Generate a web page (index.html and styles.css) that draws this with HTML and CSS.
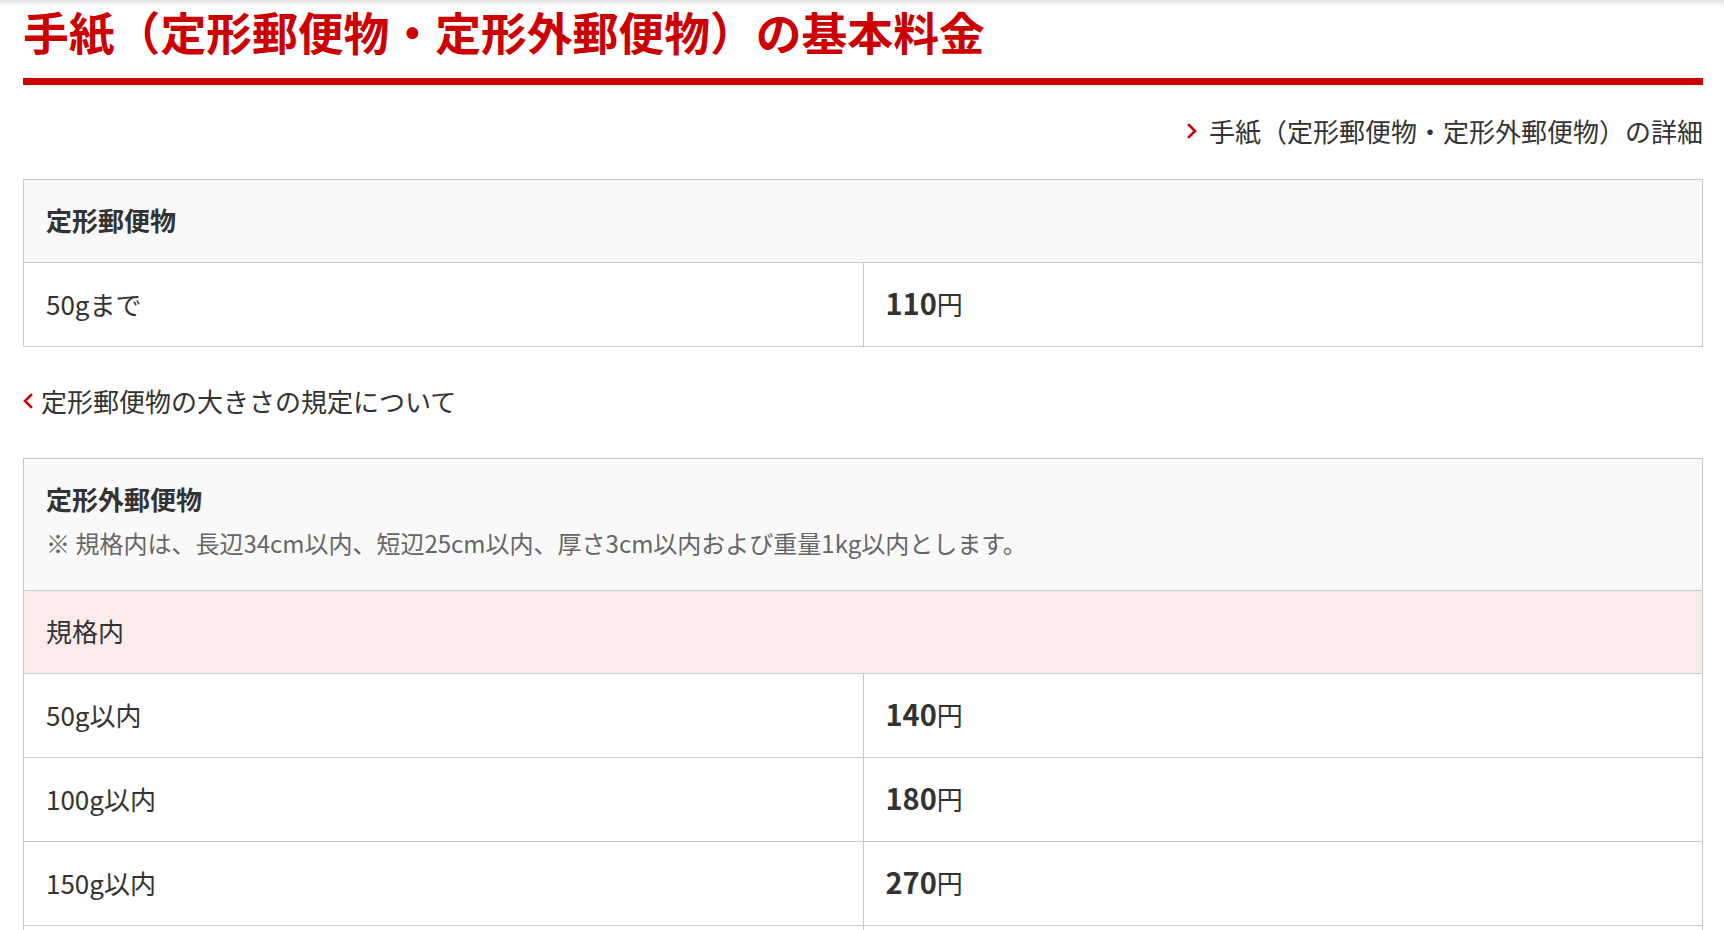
FILE: index.html
```html
<!DOCTYPE html>
<html lang="ja">
<head>
<meta charset="utf-8">
<title>手紙の基本料金</title>
<link rel="stylesheet" href="styles.css">
</head>
<body>
<div class="page">
  <h2 class="title">手紙（定形郵便物・定形外郵便物）の基本料金</h2>

  <div class="link-row link-row--right">
    <a class="link" href="#">
      <svg class="chev" width="10" height="16" viewBox="0 0 10 16"><polyline points="2,2 8,8 2,14"/></svg>
      <span>手紙（定形郵便物・定形外郵便物）の詳細</span>
    </a>
  </div>

  <table class="rate">
    <colgroup><col class="col-half"><col class="col-half"></colgroup>
    <tr><th colspan="2" class="head">定形郵便物</th></tr>
    <tr><td>50gまで</td><td class="price"><b>110</b>円</td></tr>
  </table>

  <div class="link-row link-row--mid">
    <a class="link" href="#">
      <svg class="chev" width="10" height="16" viewBox="0 0 10 16"><polyline points="8,2 2,8 8,14"/></svg>
      <span>定形郵便物の大きさの規定について</span>
    </a>
  </div>

  <table class="rate">
    <colgroup><col class="col-half"><col class="col-half"></colgroup>
    <tr>
      <th colspan="2" class="head head--note">
        <div class="head-title">定形外郵便物</div>
        <div class="note">※ 規格内は、長辺34cm以内、短辺25cm以内、厚さ3cm以内および重量1kg以内とします。</div>
      </th>
    </tr>
    <tr><td colspan="2" class="sub">規格内</td></tr>
    <tr><td>50g以内</td><td class="price"><b>140</b>円</td></tr>
    <tr><td>100g以内</td><td class="price"><b>180</b>円</td></tr>
    <tr><td>150g以内</td><td class="price"><b>270</b>円</td></tr>
    <tr><td>250g以内</td><td class="price"><b>320</b>円</td></tr>
  </table>
</div>
</body>
</html>
```
FILE: styles.css
```css
html, body {
  margin: 0;
  padding: 0;
  background: #fff;
}
body {
  font-family: "Noto Sans CJK JP", "Noto Sans", sans-serif;
  color: #333;
  font-size: 26px;
}
.page {
  padding: 0 21px 0 23px;
  box-shadow: inset 0 9px 9px -9px rgba(0, 0, 0, 0.25);
  min-height: 930px;
  box-sizing: border-box;
  overflow: hidden;
}
.title {
  margin: 0;
  padding-top: 1px;
  padding-bottom: 17px;
  font-size: 45.8px;
  line-height: 60px;
  font-weight: 700;
  color: #cc0000;
  border-bottom: 7px solid #cc0000;
  letter-spacing: 0;
  white-space: nowrap;
}
.link-row {
  display: flex;
  line-height: 38px;
}
.link-row--right {
  justify-content: flex-end;
  margin: 27px 0 29px;
}
.link-row--mid {
  margin: 35px 0 38px;
}
.link {
  display: flex;
  align-items: center;
  color: #333;
  text-decoration: none;
}
.link-row--right .link { gap: 12px; }
.link-row--mid .link { gap: 8px; }
.chev {
  display: block;
}
.chev polyline {
  fill: none;
  stroke: #cc0000;
  stroke-width: 2.6;
  stroke-linecap: square;
}
.rate {
  width: 100%;
  border-collapse: collapse;
  table-layout: fixed;
}
.col-half { width: 50%; }
.rate th,
.rate td {
  border: 1px solid #c9c9c9;
  padding: 21px 22px 23px;
  line-height: 38px;
  text-align: left;
  vertical-align: middle;
  font-size: 26px;
}
.rate td.price,
.rate td.price + td,
.rate tr:nth-child(n+3) td {
  padding-top: 21.5px;
  padding-bottom: 23.5px;
}
.rate .head {
  background: #f9f9f9;
  font-weight: 700;
}
.rate .head--note {
  padding-bottom: 28px;
}
.head-title {
  line-height: 38px;
}
.note {
  margin-top: 6px;
  line-height: 38px;
  font-size: 24px;
  font-weight: 400;
  color: #666;
}
.rate .sub {
  background: #fbebea;
}
.price b {
  font-size: 29px;
  line-height: 20px;
  font-weight: 700;
}
```
